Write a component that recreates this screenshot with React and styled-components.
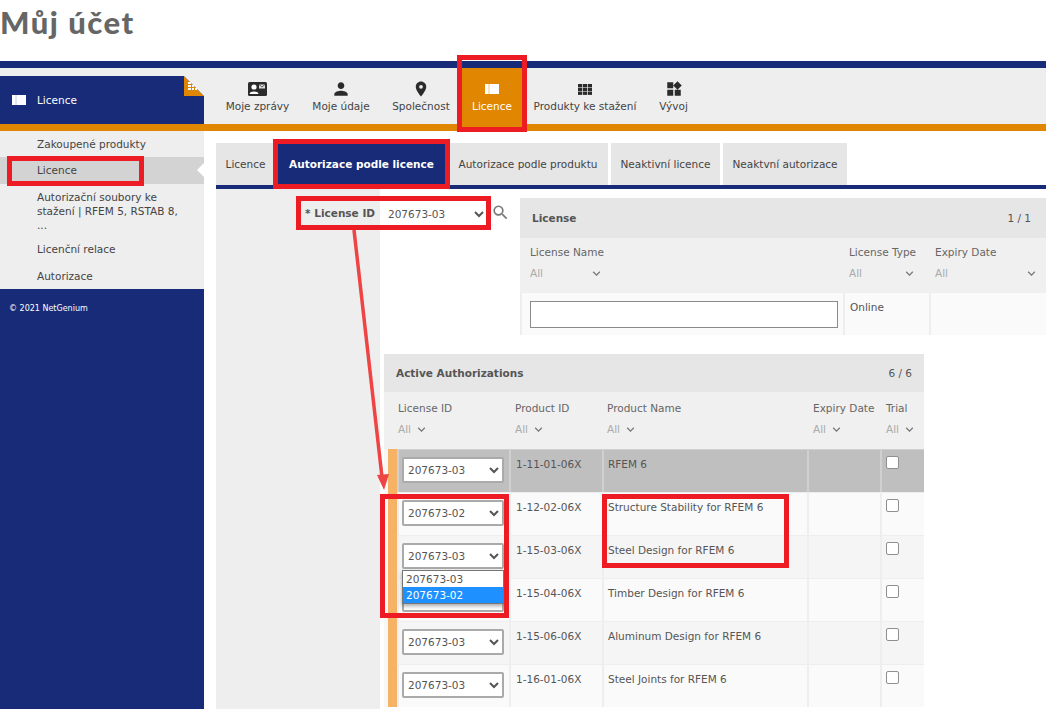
import styled, { createGlobalStyle } from "styled-components";
import { MdPerson, MdPlace, MdWidgets, MdSearch, MdKeyboardArrowDown } from "react-icons/md";

const NAVY = "#172b78";
const ORANGE = "#e08600";

const GlobalStyle = createGlobalStyle`
    html, body {
        margin: 0;
        height: 709px;
        overflow: hidden;
        background: #fff;
        font-family: "DejaVu Sans", Tahoma, sans-serif;
        font-size: 10.5px;
        color: #444;
    }
`;

const Page = styled.div`
    position: relative;
    width: 1046px;
    height: 709px;
    overflow: hidden;
`;

const Title = styled.h1`
    margin: 0;
    height: 61px;
    padding-top: 2px;
    box-sizing: border-box;
    font: 900 31px/40px "Lato", sans-serif;
    letter-spacing: 1.5px;
    color: #666;
`;

const TopBand = styled.div`
    display: flex;
    height: 56px;
    border-top: 7px solid ${NAVY};
    border-bottom: 7px solid ${ORANGE};
    background: #eee;
`;

const SectionHead = styled.div`
    position: relative;
    display: flex;
    align-items: center;
    gap: 11px;
    width: 204px;
    height: 48px;
    margin-top: 8px;
    padding-left: 12px;
    box-sizing: border-box;
    background: ${NAVY};
    color: #fff;
`;

const Fold = styled.svg`
    position: absolute;
    top: 0;
    right: 0;
`;

const Toolbar = styled.nav`
    display: flex;
    padding-left: 9px;
`;

const ToolItem = styled.a`
    display: flex;
    flex-direction: column;
    align-items: center;
    width: ${(p) => p.$w}px;
    padding-top: 12px;
    box-sizing: border-box;
    background: ${(p) => (p.$active ? ORANGE : "transparent")};
    color: ${(p) => (p.$active ? "#fff" : "#444")};
    white-space: nowrap;
`;

const ToolIcon = styled.span`
    display: flex;
    align-items: center;
    justify-content: center;
    height: 18px;
`;

const ToolLabel = styled.span`
    margin-top: 1px;
    line-height: 14px;
`;

const Below = styled.div`
    display: grid;
    grid-template-columns: 204px 1fr;
`;

const SideCol = styled.aside`
    background: ${NAVY};
    height: 578px;
`;

const SideMenu = styled.ul`
    margin: 0;
    padding: 0;
    list-style: none;
    background: #eee;
    height: 158px;
`;

const SideItem = styled.li`
    position: relative;
    padding: ${(p) => (p.$multi ? "6px 14px 4px 37px" : "6px 14px 6px 37px")};
    line-height: 14.3px;
    background: ${(p) => (p.$active ? "#d3d3d3" : "transparent")};
    ${(p) =>
        p.$active &&
        `&::after {
            content: "";
            position: absolute;
            right: 0;
            top: 6px;
            border: 7px solid transparent;
            border-right-color: #fff;
        }`}
`;

const Copyright = styled.div`
    padding: 14px 9px;
    font-size: 8px;
    color: #fff;
    line-height: 12px;
`;

const Main = styled.main`
    padding: 12px 0 0 12px;
`;

const Tabs = styled.div`
    display: flex;
    gap: 3px;
    height: 42px;
    border-bottom: 4px solid ${NAVY};
`;

const Tab = styled.a`
    display: flex;
    align-items: center;
    justify-content: center;
    width: ${(p) => p.$w}px;
    background: ${(p) => (p.$active ? NAVY : "#e6e6e6")};
    color: ${(p) => (p.$active ? "#fff" : "#444")};
    font-weight: ${(p) => (p.$active ? 700 : 400)};
    white-space: nowrap;
`;

const Body = styled.div`
    display: grid;
    grid-template-columns: 164px 1fr;
`;

const FormCol = styled.div`
    height: 520px;
    background: #eee;
    padding: 17px 5px 0 0;
    box-sizing: border-box;
    text-align: right;
    font-weight: 700;
    color: #555;
    line-height: 14px;
`;

const ContentCol = styled.div`
    padding: 9px 0 0 4px;
`;

const TopRow = styled.div`
    display: flex;
    align-items: flex-start;
`;

const Select = styled.select`
    flex: none;
    width: ${(p) => (p.$bare ? 103 : 102)}px;
    height: ${(p) => (p.$bare ? 20 : 26)}px;
    margin-top: ${(p) => (p.$bare ? 6 : 0)}px;
    padding: 0;
    box-sizing: border-box;
    background: #fff;
    border: ${(p) => (p.$bare ? "0" : "2px solid #aaa")};
    border-radius: 2px;
    font: 10.5px "DejaVu Sans", sans-serif;
    color: #555;
`;

const SearchIcon = styled(MdSearch)`
    flex: none;
    margin: 5px 0 0 4px;
    color: #777;
`;

const Panel = styled.section`
    background: #f7f7f7;
`;

const LicensePanel = styled(Panel)`
    flex: 1;
    margin-left: 10px;
`;

const AuthPanel = styled(Panel)`
    width: 540px;
    margin-top: 19px;
`;

const PanelHead = styled.div`
    display: flex;
    justify-content: space-between;
    align-items: center;
    height: ${(p) => p.$h}px;
    padding: 0 ${(p) => p.$pr}px 0 12px;
    background: #e6e6e6;
    font-weight: 700;
    color: #555;
    span:last-child { font-weight: 400; }
`;

const Columns = styled.div`
    display: grid;
    grid-template-columns: ${(p) => p.$cols};
`;

const FilterCell = styled.div`
    height: ${(p) => p.$h}px;
    padding: ${(p) => p.$pt || 7}px 4px 0 ${(p) => p.$pl || 0}px;
    box-sizing: border-box;
    background: #f0f0f0;
    color: #666;
    line-height: 14px;
    white-space: nowrap;
`;

const FilterValue = styled.div`
    display: flex;
    justify-content: ${(p) => (p.$w ? "space-between" : "flex-start")};
    align-items: center;
    gap: 3px;
    width: ${(p) => p.$w || "auto"};
    height: 14px;
    margin-top: 7px;
    color: #aaa;
    svg { color: #777; }
`;

const Cell = styled.div`
    position: relative;
    height: 43px;
    padding: ${(p) => p.$pad || "7px 0 0 5px"};
    box-sizing: border-box;
    background: ${(p) => (p.$dark ? "#bfbfbf" : p.$odd ? "#f5f5f5" : "#fafafa")};
    border-left: 2px solid ${(p) => (p.$dark ? "#d0d0d0" : "#eee")};
    border-top: 1px solid ${(p) => (p.$dark ? "#d0d0d0" : "#eee")};
    line-height: 14px;
    color: #555;
    white-space: nowrap;
`;

const LicenseInput = styled.input`
    display: block;
    width: 308px;
    height: 27px;
    box-sizing: border-box;
    background: #fff;
    border: 1px solid #8a8a8a;
`;

const StripRows = styled.div`
    border-left: 9px solid #f6b265;
    margin-left: 4px;
`;

const Check = styled.input.attrs({ type: "checkbox" })`
    appearance: none;
    display: block;
    width: 13px;
    height: 13px;
    margin: 0;
    box-sizing: border-box;
    background: #fff;
    border: 1px solid #8f8f8f;
    border-radius: 2px;
`;

const DropList = styled.div`
    position: absolute;
    z-index: 2;
    top: 34px;
    left: 3px;
    width: 102px;
    box-sizing: border-box;
    border: 1px solid #777;
    background: #fff;
    box-shadow: 0 2px 4px rgba(0, 0, 0, 0.35);
    line-height: 16px;
`;

const DropOption = styled.div`
    padding-left: 3px;
    background: ${(p) => (p.$active ? "#1e90ff" : "#fff")};
    color: ${(p) => (p.$active ? "#fff" : "#555")};
`;

const Mark = styled.div`
    position: absolute;
    z-index: 5;
    left: ${(p) => p.$x}px;
    top: ${(p) => p.$y}px;
    width: ${(p) => p.$w}px;
    height: ${(p) => p.$h}px;
    box-sizing: border-box;
    border: 5px solid #ed1c24;
    pointer-events: none;
`;

const Arrow = styled.svg`
    position: absolute;
    z-index: 4;
    left: 340px;
    top: 225px;
`;

const BookIcon = ({ line }) => (
    <svg width="14" height="10" viewBox="0 0 14 10">
        <rect width="14" height="10" fill="#fff" />
        <rect x="3.5" width="1" height="10" fill={line} />
    </svg>
);

const CardIcon = () => (
    <svg width="19" height="14" viewBox="0 0 19 14">
        <rect width="19" height="14" rx="1.5" fill="#2b2b2b" />
        <circle cx="6" cy="5" r="2.6" fill="#fff" />
        <path d="M1.5 12 C2 8.8 10 8.8 10.5 12 Z" fill="#fff" />
        <rect x="11" y="2.5" width="6" height="4" fill="#ddd" />
        <path d="M11 2.5 L14 5 L17 2.5" stroke="#2b2b2b" strokeWidth="0.7" fill="none" />
    </svg>
);

const GridIcon = () => (
    <svg width="14" height="11" viewBox="0 0 14 11" fill="#2b2b2b">
        {[0, 3.8, 7.6].map((y) =>
            [0, 4.9, 9.8].map((x) => <rect key={`${x}-${y}`} x={x} y={y} width="4.2" height="3.3" />)
        )}
    </svg>
);

const tools = [
    { label: "Moje zprávy", icon: <CardIcon />, w: 89 },
    { label: "Moje údaje", icon: <MdPerson size={20} color="#2b2b2b" />, w: 78 },
    { label: "Společnost", icon: <MdPlace size={18} color="#2b2b2b" />, w: 82 },
    { label: "Licence", icon: <BookIcon line="#f3c680" />, w: 60, active: true },
    { label: "Produkty ke stažení", icon: <GridIcon />, w: 126 },
    { label: "Vývoj", icon: <MdWidgets size={18} color="#2b2b2b" />, w: 51 },
];

const tabs = [
    { label: "Licence", w: 59 },
    { label: "Autorizace podle licence", w: 167, active: true },
    { label: "Autorizace podle produktu", w: 160 },
    { label: "Neaktivní licence", w: 109 },
    { label: "Neaktvní autorizace", w: 124 },
];

const rows = [
    { lic: "207673-03", id: "1-11-01-06X", name: "RFEM 6", dark: true },
    { lic: "207673-02", id: "1-12-02-06X", name: "Structure Stability for RFEM 6" },
    { lic: "207673-03", id: "1-15-03-06X", name: "Steel Design for RFEM 6", odd: true, open: true },
    { lic: "207673-03", id: "1-15-04-06X", name: "Timber Design for RFEM 6" },
    { lic: "207673-03", id: "1-15-06-06X", name: "Aluminum Design for RFEM 6", odd: true },
    { lic: "207673-03", id: "1-16-01-06X", name: "Steel Joints for RFEM 6" },
];

const authCols = "112px 93px 205px 73px 44px";
const authHeaders = [
    ["License ID", 1],
    ["Product ID", 6],
    ["Product Name", 5],
    ["Expiry Date", 6],
    ["Trial", 6],
];

const Chevron = () => <MdKeyboardArrowDown size={15} />;

const App = () => {
    return (
        <Page>
            <GlobalStyle />
            <Title>Můj účet</Title>
            <TopBand>
                <SectionHead>
                    <BookIcon line="#c9cede" />
                    Licence
                    <Fold width="20" height="20" viewBox="0 0 20 20">
                        <path d="M0 0 L20 20 L0 20 Z" fill={ORANGE} />
                        <path d="M0 0 L20 20 L20 0 Z" fill="#eee" />
                        <path d="M4 6h3v2H4zM4 9h3v2H4zM8 9h2v2H8zM4 12h3v2H4zM8 12h2v2H8zM11 12h2v2h-2z" fill="#fff" />
                    </Fold>
                </SectionHead>
                <Toolbar>
                    {tools.map(({ label, icon, w, active }) => (
                        <ToolItem key={label} $w={w} $active={active}>
                            <ToolIcon>{icon}</ToolIcon>
                            <ToolLabel>{label}</ToolLabel>
                        </ToolItem>
                    ))}
                </Toolbar>
            </TopBand>
            <Below>
                <SideCol>
                    <SideMenu>
                        <SideItem>Zakoupené produkty</SideItem>
                        <SideItem $active>Licence</SideItem>
                        <SideItem $multi>Autorizační soubory ke stažení | RFEM 5, RSTAB 8, ...</SideItem>
                        <SideItem>Licenční relace</SideItem>
                        <SideItem>Autorizace</SideItem>
                    </SideMenu>
                    <Copyright>© 2021 NetGenium</Copyright>
                </SideCol>
                <Main>
                    <Tabs>
                        {tabs.map((t) => (
                            <Tab key={t.label} $w={t.w} $active={t.active}>{t.label}</Tab>
                        ))}
                    </Tabs>
                    <Body>
                        <FormCol>* License ID</FormCol>
                        <ContentCol>
                            <TopRow>
                                <Select $bare defaultValue="207673-03">
                                    <option>207673-03</option>
                                    <option>207673-02</option>
                                </Select>
                                <SearchIcon size={19} />
                                <LicensePanel>
                                    <PanelHead $h={40} $pr={15}>
                                        <span>License</span>
                                        <span>1 / 1</span>
                                    </PanelHead>
                                    <Columns $cols="323px 86px 1fr">
                                        <FilterCell $h={54} $pl={10}>
                                            License Name
                                            <FilterValue $w="74px">All <Chevron /></FilterValue>
                                        </FilterCell>
                                        <FilterCell $h={54} $pl={6}>
                                            License Type
                                            <FilterValue $w="68px">All <Chevron /></FilterValue>
                                        </FilterCell>
                                        <FilterCell $h={54} $pl={6}>
                                            Expiry Date
                                            <FilterValue $w="104px">All <Chevron /></FilterValue>
                                        </FilterCell>
                                        <Cell $pad="8px 0 0 8px"><LicenseInput /></Cell>
                                        <Cell>Online</Cell>
                                        <Cell />
                                    </Columns>
                                </LicensePanel>
                            </TopRow>
                            <AuthPanel>
                                <PanelHead $h={38} $pr={12}>
                                    <span>Active Authorizations</span>
                                    <span>6 / 6</span>
                                </PanelHead>
                                <Columns $cols={`13px ${authCols}`}>
                                    <FilterCell $h={57} />
                                    {authHeaders.map(([h, pl]) => (
                                        <FilterCell key={h} $h={57} $pl={pl} $pt={9}>
                                            {h}
                                            <FilterValue>All <Chevron /></FilterValue>
                                        </FilterCell>
                                    ))}
                                </Columns>
                                <StripRows>
                                    {rows.map((r) => (
                                        <Columns key={r.id} $cols={authCols}>
                                            <Cell $dark={r.dark} $odd={r.odd} $pad="7px 0 0 3px">
                                                <Select defaultValue={r.lic}>
                                                    <option>207673-03</option>
                                                    <option>207673-02</option>
                                                </Select>
                                                {r.open && (
                                                    <DropList>
                                                        <DropOption>207673-03</DropOption>
                                                        <DropOption $active>207673-02</DropOption>
                                                    </DropList>
                                                )}
                                            </Cell>
                                            <Cell $dark={r.dark} $odd={r.odd}>{r.id}</Cell>
                                            <Cell $dark={r.dark} $odd={r.odd} $pad="7px 0 0 4px">{r.name}</Cell>
                                            <Cell $dark={r.dark} $odd={r.odd} />
                                            <Cell $dark={r.dark} $odd={r.odd} $pad="6px 0 0 4px"><Check /></Cell>
                                        </Columns>
                                    ))}
                                </StripRows>
                            </AuthPanel>
                        </ContentCol>
                    </Body>
                </Main>
            </Below>
            <Arrow width="70" height="280" viewBox="0 0 70 280">
                <path d="M14 5 L42 252" stroke="#ef4444" strokeWidth="3.5" fill="none" />
                <path d="M37 250 L49 249 L44 265 Z" fill="#ef4444" />
            </Arrow>
            <Mark $x={457} $y={55} $w={70} $h={77} />
            <Mark $x={7} $y={156} $w={137} $h={30} />
            <Mark $x={273} $y={139} $w={177} $h={50} />
            <Mark $x={296} $y={196} $w={195} $h={34} />
            <Mark $x={380} $y={494} $w={129} $h={124} />
            <Mark $x={602} $y={494} $w={187} $h={74} />
        </Page>
    );
};

export default App;
